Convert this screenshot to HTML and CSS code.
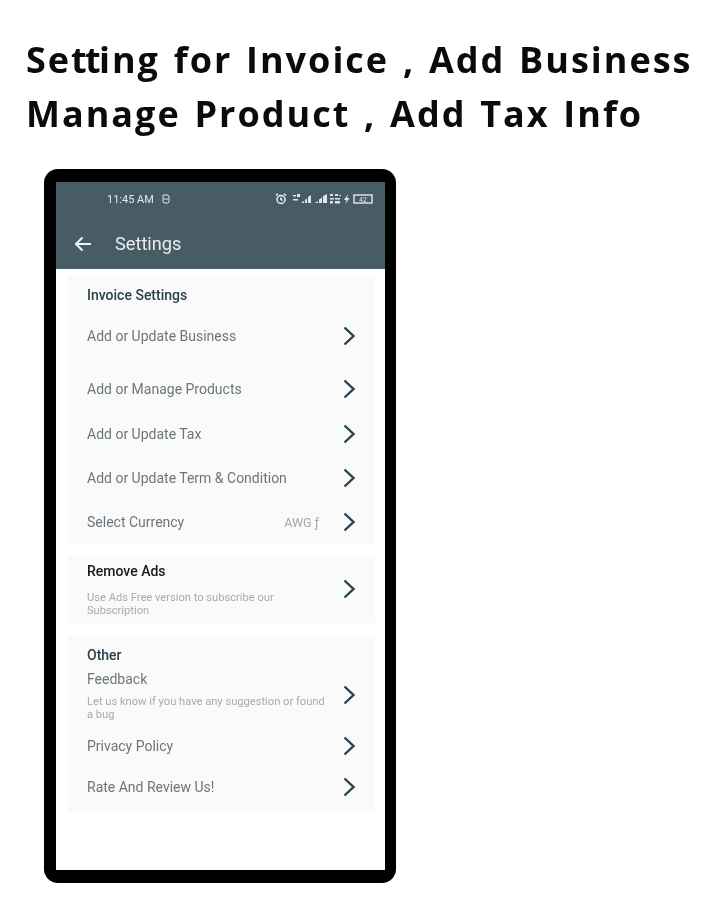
FILE: index.html
```html
<!DOCTYPE html>
<html lang="en">
<head>
<meta charset="utf-8">
<title>Settings</title>
<link rel="stylesheet" href="styles.css">
</head>
<body>
<svg class="defs" width="0" height="0" aria-hidden="true"><defs>
<symbol id="chev" viewBox="0 0 14 20"><path d="M2.500 1.500 L11.500 10 L2.500 18.500" fill="none" stroke="#264350" stroke-width="2.400"/></symbol>
</defs></svg>
<h1 class="title">Se<span class="lig">tt</span>ing for Invoice , Add Business<br>Manage Product , Add Tax Info</h1>
<div class="phone">
  <div class="screen">
    <header class="appbar">
      <div class="status">
        <span class="time">11:45 AM</span>
        <svg class="simicon" width="8" height="10" viewBox="0 0 8 10"><path d="M1 1h5l1 2v5L6 9H2L1 8zM1.500 5h5" fill="none" stroke="#dfe5e8" stroke-width="1"/></svg>
        <span class="spacer"></span>
        <svg width="98" height="12" viewBox="0 0 98 12">
          <g fill="none" stroke="#eef2f3" stroke-width="1.500"><circle cx="6" cy="6.500" r="4"/><path d="M6 4.500v2l1.500 1M1 2.500 3 .800M11 2.500 9 .800"/></g>
          <g fill="#dfe5e8">
            <path d="M18 2h3v1.500h-3zM22 1h3v3h-3zM18 6h5v1.500h-5zM26 10l3-2v2zM30 10V7l2-1.500V10zM33 10V4l3-2v8z"/>
            <path d="M40 10l3-2v2zM44 10V6.500l3-2V10zM48 10V3l4-2v9z"/>
            <path d="M55 1h3v2h-3zM60 1h3v2h-3zM64 2h2v1h-2zM55 5h4v1.500h-4zM60 5h5v1.500h-5zM55 8h3v2.500h-3zM60 8h5v2.500h-5z"/>
            <path d="M73 1l-4 6h2.500l-1 4 4-6H72l1-4z"/>
          </g>
          <rect x="79" y="2" width="18" height="8" fill="none" stroke="#eef2f3" stroke-width="1.300"/>
          <text x="84" y="8.500" class="batt">42</text>
        </svg>
      </div>
      <div class="toolbar">
        <svg class="back" width="18" height="16" viewBox="0 0 18 16"><path d="M17 8H2M8.500 1.500 2 8l6.500 6.500" fill="none" stroke="#eef2f3" stroke-width="2"/></svg>
        <span class="bar-title">Settings</span>
      </div>
    </header>
    <main class="list">
      <section class="card card-invoice">
        <h2 class="heading heading-slate">Invoice Settings</h2>
        <div class="row row-business"><span class="label">Add or Update Business</span><svg class="chev"><use href="#chev"/></svg></div>
        <div class="row row-products"><span class="label">Add or Manage Products</span><svg class="chev"><use href="#chev"/></svg></div>
        <div class="row row-tax"><span class="label">Add or Update Tax</span><svg class="chev"><use href="#chev"/></svg></div>
        <div class="row row-std"><span class="label">Add or Update Term &amp; Condition</span><svg class="chev"><use href="#chev"/></svg></div>
        <div class="row row-std"><span class="label">Select Currency</span><span class="value">AWG ƒ</span><svg class="chev"><use href="#chev"/></svg></div>
      </section>
      <section class="card card-ads">
        <div class="row">
          <div class="stack">
            <h2 class="heading">Remove Ads</h2>
            <p class="sub sub-ads">Use Ads Free version to subscribe our Subscription</p>
          </div>
          <svg class="chev chev-ads"><use href="#chev"/></svg>
        </div>
      </section>
      <section class="card card-other">
        <h2 class="heading heading-slate">Other</h2>
        <div class="row row-feedback">
          <div class="stack">
            <span class="label label-block">Feedback</span>
            <p class="sub sub-feedback">Let us know if you have any suggestion or found a bug</p>
          </div>
          <svg class="chev chev-feedback"><use href="#chev"/></svg>
        </div>
        <div class="row row-privacy"><span class="label">Privacy Policy</span><svg class="chev"><use href="#chev"/></svg></div>
        <div class="row row-rate"><span class="label">Rate And Review Us!</span><svg class="chev"><use href="#chev"/></svg></div>
      </section>
    </main>
  </div>
</div>
</body>
</html>
```
FILE: styles.css
```css
* { box-sizing: border-box; }
html, body { margin: 0; padding: 0; }
body { width: 710px; height: 900px; background: #fff; overflow: hidden; font-family: Roboto, sans-serif; }
.defs { display: block; height: 0; }
.title {
  margin: 0;
  padding: 33px 0 0 26px;
  font-family: "Open Sans", sans-serif;
  font-weight: 700;
  font-size: 36px;
  line-height: 54px;
  letter-spacing: 2px;
  word-spacing: 2.400px;
  color: #0b0b0b;
  white-space: nowrap;
  filter: blur(.4px);
}
.lig { letter-spacing: -1.700px; }
.phone {
  width: 352px;
  height: 714px;
  margin: 28px 0 0 44px;
  padding: 13px 11px 13px 12px;
  background: #000;
  border-radius: 14px;
  filter: blur(.4px);
}
.screen { height: 100%; background: #fff; overflow: hidden; }
.appbar { height: 87px; background: #485c66; color: #eef2f3; }
.status { height: 34px; display: flex; align-items: center; padding: 0 12px 0 51px; }
.time { font-size: 11px; color: #e4e9eb; }
.simicon { margin-left: 8px; }
.spacer { flex: 1; }
.batt { font-family: Roboto, sans-serif; font-size: 7px; fill: #dfe5e8; }
.toolbar { display: flex; align-items: center; height: 53px; padding: 2px 0 0 18px; }
.bar-title { margin-left: 23px; font-size: 18.200px; color: #e8edef; }
.list { padding: 6px 10px 0 12px; display: flex; flex-direction: column; }
.card { background: #fafafa; padding: 0 19px; }
.card-invoice { height: 270px; padding-top: 12px; }
.card-ads { height: 67px; margin-top: 11px; padding-top: 7px; }
.card-other { height: 176px; margin-top: 13px; padding-top: 11px; }
.heading { margin: 0; font-size: 14px; line-height: 16px; font-weight: 500; color: #14191c; }
.heading-slate { color: #2a3f49; }
.row { display: flex; align-items: center; }
.label { font-size: 14px; line-height: 18px; color: #6b767c; }
.label-block { display: block; }
.value { margin-left: auto; font-size: 12.500px; color: #a2a7aa; margin-right: 23px; }
.chev { width: 14px; height: 20px; margin-left: auto; flex: none; }
.value + .chev { margin-left: 0; }
.chev-ads { margin-bottom: 3px; }
.chev-feedback { margin-bottom: 2px; }
.row-business { height: 18px; margin-top: 24px; }
.row-products { height: 18px; margin-top: 35px; }
.row-tax { height: 18px; margin-top: 27px; }
.row-std { height: 18px; margin-top: 26px; }
.stack { width: 240px; }
.sub { margin: 0; font-size: 11.150px; line-height: 13px; color: #a6abae; }
.sub-ads { margin-top: 12px; }
.sub-feedback { margin-top: 7px; }
.row-feedback { margin-top: 7px; }
.row-privacy { height: 18px; margin-top: 16px; }
.row-rate { height: 18px; margin-top: 23px; }
```
